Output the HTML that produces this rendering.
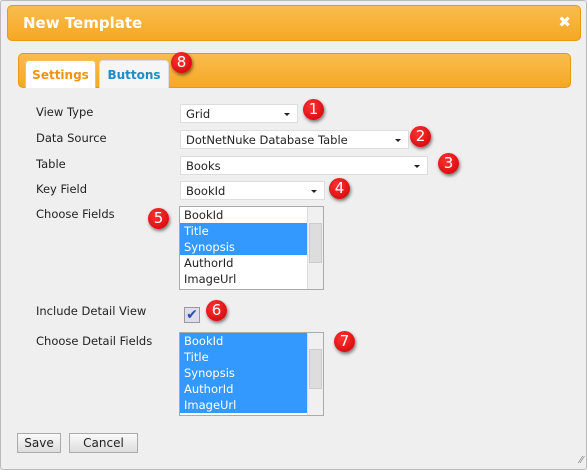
<!DOCTYPE html>
<html><head><style>
*{box-sizing:border-box}
body{margin:0;width:587px;height:470px;background:#efefef;font-family:"DejaVu Sans","Liberation Sans",sans-serif;font-size:11.5px;color:#222;position:relative;overflow:hidden}
.a{position:absolute}
.frame{left:0;top:0;width:587px;height:470px;border:1px solid #bbb;border-radius:3px}
.title{left:7px;top:5px;width:574px;height:36px;border:1px solid #e39a1b;border-radius:5px;background:linear-gradient(#f9bc4f,#f6a823);color:#fff;font-weight:bold;font-size:15px;padding:8px 15px}
.x{right:16px;top:13px;color:#fff;font-weight:bold;font-size:15px}
.tabs{left:18px;top:53px;width:553px;height:35px;border:1px solid #e39a1b;border-radius:5px;background:linear-gradient(#f9bc4f,#f6a823)}
.tab{top:6px;height:28px;border:1px solid #ddd;border-bottom:none;border-radius:4px 4px 0 0;font-weight:bold;font-size:12px;text-align:center;padding-top:7px}
.lbl{left:36px}
.sel{background:#fff;border:1px solid #ddd;height:19px;padding:2px 5px;font-size:11.5px}
.sel:after{content:"";position:absolute;right:7px;top:8px;border:3px solid transparent;border-top:3px solid #222;border-bottom:0}
.lb{background:#fff;border:1px solid #aaa;width:145px;height:84px}
.lb .it{height:16px;padding-left:4px;line-height:16px;width:127px}
.s{background:#3399ff;color:#fff}
.sb{right:0;top:0;width:16px;height:82px;background:#f0f0f0;border-left:1px solid #ddd}
.th{left:1px;top:16px;width:13px;height:40px;background:#ddd;border:1px solid #ccc}
.b{width:21px;height:21px;border-radius:50%;background:radial-gradient(circle at 40% 35%,#f33,#c00);color:#fff;font-size:15px;text-align:center;line-height:21px;box-shadow:1px 2px 3px rgba(0,0,0,.5)}
.btn{top:433px;height:20px;border:1px solid #aaa;background:linear-gradient(#fafafa,#ddd);font-size:12px;text-align:center;line-height:18px}
</style></head><body>
<div class="a frame"></div>
<div class="a title">New Template</div><div class="a x">✖</div>
<div class="a tabs">
<div class="a tab" style="left:6px;width:71px;background:#fff;color:#f0930e;border-color:#f6c15a">Settings</div>
<div class="a tab" style="left:80px;width:70px;background:#f5f5f5;color:#1e8cc8">Buttons</div>
</div>
<div class="a b" style="left:171px;top:52px">8</div>
<div class="a lbl" style="top:105px">View Type</div>
<div class="a lbl" style="top:131px">Data Source</div>
<div class="a lbl" style="top:157px">Table</div>
<div class="a lbl" style="top:182px">Key Field</div>
<div class="a lbl" style="top:207px">Choose Fields</div>
<div class="a lbl" style="top:304px">Include Detail View</div>
<div class="a lbl" style="top:334px">Choose Detail Fields</div>
<div class="a sel" style="left:180px;top:104px;width:118px">Grid</div>
<div class="a b" style="left:303px;top:99px">1</div>
<div class="a sel" style="left:180px;top:130px;width:229px">DotNetNuke Database Table</div>
<div class="a b" style="left:410px;top:126px">2</div>
<div class="a sel" style="left:180px;top:156px;width:248px">Books</div>
<div class="a b" style="left:438px;top:153px">3</div>
<div class="a sel" style="left:180px;top:181px;width:145px">BookId</div>
<div class="a b" style="left:329px;top:178px">4</div>
<div class="a lb" style="left:179px;top:206px"><div class="it">BookId</div><div class="it s">Title</div><div class="it s">Synopsis</div><div class="it">AuthorId</div><div class="it">ImageUrl</div><div class="a sb"><div class="a th"></div></div></div>
<div class="a b" style="left:148px;top:208px">5</div>
<div class="a" style="left:184px;top:307px;width:16px;height:16px;border:1px solid #999;background:#dde;color:#2a4db0;font-size:14px;line-height:14px;text-align:center">✔</div>
<div class="a b" style="left:206px;top:300px">6</div>
<div class="a lb" style="left:179px;top:332px"><div class="it s">BookId</div><div class="it s">Title</div><div class="it s">Synopsis</div><div class="it s">AuthorId</div><div class="it s">ImageUrl</div><div class="a sb"><div class="a th"></div></div></div>
<div class="a b" style="left:334px;top:331px">7</div>
<div class="a btn" style="left:17px;width:44px">Save</div>
<div class="a btn" style="left:69px;width:69px">Cancel</div>
<div class="a" style="right:4px;bottom:4px;color:#888;font-size:10px">⁄⁄</div>
</body></html>
